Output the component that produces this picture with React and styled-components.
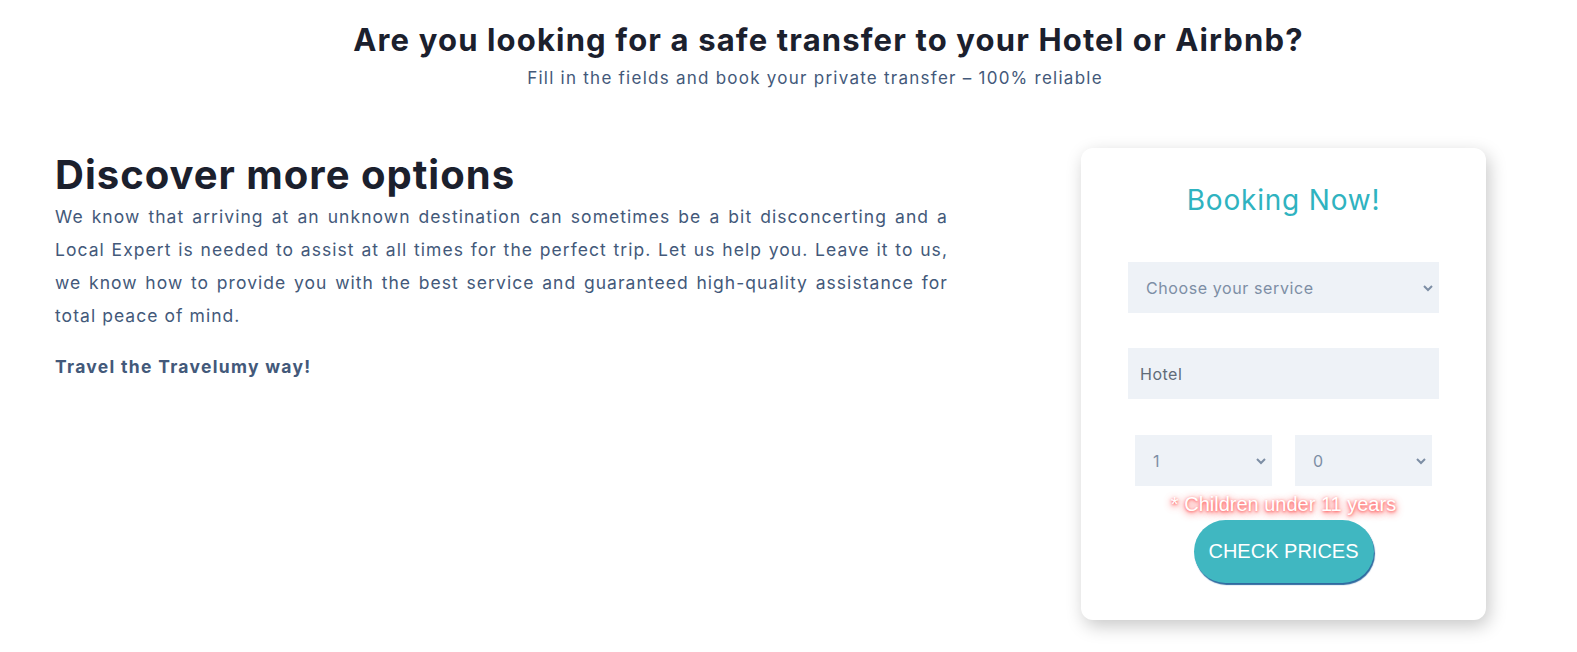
import React from 'react';
import styled, { createGlobalStyle } from 'styled-components';

const GlobalStyle = createGlobalStyle`
    body {
        margin: 0;
        background: #fff;
        font-family: 'Inter', 'Open Sans', sans-serif;
    }
`;

const Page = styled.div`
    width: 1577px;
    height: 652px;
    overflow: hidden;
    background: #fff;
`;

const Intro = styled.header`
    display: flex;
    flex-direction: column;
    align-items: center;
    padding-top: 21px;
`;

const MainTitle = styled.h2`
    margin: 0 0 0 80px;
    font-size: 31px;
    font-weight: 700;
    line-height: 38px;
    color: #1b202d;
    letter-spacing: 1.15px;
`;

const Subtitle = styled.p`
    margin: 7px 0 0 53px;
    font-size: 17px;
    line-height: 24px;
    color: #43597a;
    letter-spacing: 1.25px;
`;

const Content = styled.div`
    display: flex;
    justify-content: space-between;
    align-items: flex-start;
    padding: 58px 91px 0 55px;
`;

const TextColumn = styled.section`
    width: 893px;
`;

const SectionTitle = styled.h3`
    margin: 2px 0 0;
    font-size: 40px;
    font-weight: 700;
    line-height: 50px;
    color: #1b202d;
    letter-spacing: 1px;
`;

const Paragraph = styled.p`
    margin: 0 0 18px;
    font-size: 17.5px;
    line-height: 33px;
    color: #43597a;
    text-align: justify;
    letter-spacing: ${p => (p.$strong ? 1.3 : 1.05)}px;
    font-weight: ${p => (p.$strong ? 700 : 400)};
`;

const Card = styled.aside`
    width: 405px;
    height: 472px;
    box-sizing: border-box;
    background: #fff;
    border-radius: 12px;
    box-shadow: 3px 6px 18px rgba(0, 0, 0, 0.22);
    padding: 32px 47px 0;
    display: flex;
    flex-direction: column;
    align-items: center;
`;

const CardTitle = styled.h4`
    margin: 0;
    font-size: 28px;
    font-weight: 400;
    line-height: 40px;
    color: #2fb3c0;
    letter-spacing: 0.8px;
`;

const Field = styled.div`
    position: relative;
    width: ${p => p.$width || '311px'};
    height: 51px;
    margin-top: ${p => p.$top || 0}px;
`;

const SelectBox = styled.select`
    appearance: none;
    width: 100%;
    height: 100%;
    border: none;
    outline: none;
    background: #eef2f7;
    font-family: inherit;
    font-size: 16px;
    letter-spacing: 0.6px;
    color: #7d8ea5;
    padding: 0 0 0 ${p => p.$pad || 18}px;
`;

const TextInput = styled.input`
    width: 100%;
    height: 100%;
    box-sizing: border-box;
    border: none;
    outline: none;
    background: #eef2f7;
    font-family: inherit;
    font-size: 16px;
    letter-spacing: 0.5px;
    color: #616b78;
    padding: 0 12px;
`;

const Chevron = styled.svg`
    position: absolute;
    right: 5px;
    top: 50%;
    margin-top: -5px;
    width: 12px;
    height: 10px;
    pointer-events: none;
`;

const PairRow = styled.div`
    display: flex;
    gap: 23px;
    margin-top: 36px;
`;

const Note = styled.div`
    margin-top: 7px;
    font-family: 'Liberation Sans', Arial, sans-serif;
    font-size: 20px;
    line-height: 22px;
    color: #fff;
    text-shadow: 0 1px 3px #ff5050, 0 2px 7px #ff7a7a, 0 2px 10px #ffa0a0;
`;

const CheckButton = styled.button`
    margin-top: 5px;
    width: 180px;
    height: 63px;
    border: none;
    border-radius: 32px;
    background: #40b7c1;
    color: #fff;
    font-family: 'Liberation Sans', Arial, sans-serif;
    font-size: 20px;
    box-shadow: 1px 2px 1px #2f6aa0;
`;

const ChevronIcon = () => (
    <Chevron viewBox="0 0 12 10">
        <path d="M2 3 L6 7 L10 3" fill="none" stroke="#7d8ea5" strokeWidth="2" />
    </Chevron>
);

export default function App() {
    return (
        <Page>
            <GlobalStyle />
            <Intro>
                <MainTitle>Are you looking for a safe transfer to your Hotel or Airbnb?</MainTitle>
                <Subtitle>Fill in the fields and book your private transfer – 100% reliable</Subtitle>
            </Intro>
            <Content>
                <TextColumn>
                    <SectionTitle>Discover more options</SectionTitle>
                    <Paragraph>
                        We know that arriving at an unknown destination can sometimes be a bit disconcerting and a
                        Local Expert is needed to assist at all times for the perfect trip. Let us help you. Leave it
                        to us, we know how to provide you with the best service and guaranteed high-quality
                        assistance for total peace of mind.
                    </Paragraph>
                    <Paragraph $strong>Travel the Travelumy way!</Paragraph>
                </TextColumn>
                <Card>
                    <CardTitle>Booking Now!</CardTitle>
                    <Field $top={42}>
                        <SelectBox defaultValue="">
                            <option value="">Choose your service</option>
                        </SelectBox>
                        <ChevronIcon />
                    </Field>
                    <Field $top={35}>
                        <TextInput defaultValue="Hotel" />
                    </Field>
                    <PairRow>
                        <Field $width="137px">
                            <SelectBox $pad={18} defaultValue="1">
                                <option value="1">1</option>
                            </SelectBox>
                            <ChevronIcon />
                        </Field>
                        <Field $width="137px">
                            <SelectBox $pad={18} defaultValue="0">
                                <option value="0">0</option>
                            </SelectBox>
                            <ChevronIcon />
                        </Field>
                    </PairRow>
                    <Note>* Children under 11 years</Note>
                    <CheckButton>CHECK PRICES</CheckButton>
                </Card>
            </Content>
        </Page>
    );
}
